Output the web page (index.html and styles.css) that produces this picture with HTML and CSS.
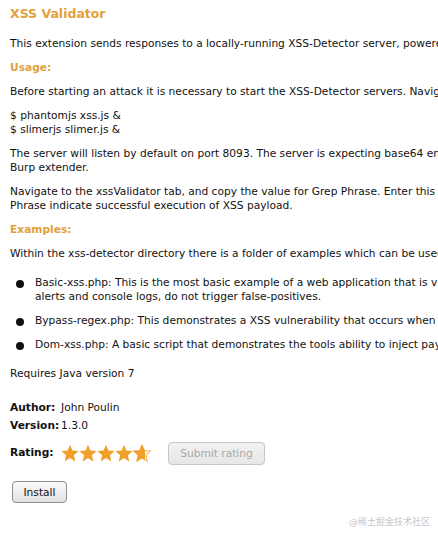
FILE: index.html
```html
<!DOCTYPE html>
<html>
<head>
<meta charset="utf-8">
<link rel="stylesheet" href="styles.css">
</head>
<body>
<div class="page">
  <h1 class="title">XSS Validator</h1>
  <p>This extension sends responses to a locally-running XSS-Detector server, powered by Phantom.js and/or Slimer.js.</p>
  <h2 class="sub">Usage:</h2>
  <p>Before starting an attack it is necessary to start the XSS-Detector servers. Navigate to the xss-detector directory and execute the following:</p>
  <p>$ phantomjs xss.js &amp;<br>$ slimerjs slimer.js &amp;</p>
  <p>The server will listen by default on port 8093. The server is expecting base64 encoded page responses passed via the<br>Burp extender.</p>
  <p>Navigate to the xssValidator tab, and copy the value for Grep Phrase. Enter this value in Intruder's Grep-Match. Matches on Grep<br>Phrase indicate successful execution of XSS payload.</p>
  <h2 class="sub">Examples:</h2>
  <p>Within the xss-detector directory there is a folder of examples which can be used to test the extender.</p>
  <ul class="list">
    <li><span class="dot"></span><span>Basic-xss.php: This is the most basic example of a web application that is vulnerable to XSS. It demonstrates how<br>alerts and console logs, do not trigger false-positives.</span></li>
    <li><span class="dot"></span><span>Bypass-regex.php: This demonstrates a XSS vulnerability that occurs when a weak regex is used.</span></li>
    <li><span class="dot"></span><span>Dom-xss.php: A basic script that demonstrates the tools ability to inject payloads into the DOM.</span></li>
  </ul>
  <p>Requires Java version 7</p>
  <div class="meta">
    <div class="row"><span class="label">Author:</span><span>John Poulin</span></div>
    <div class="row"><span class="label">Version:</span><span>1.3.0</span></div>
    <div class="row rating"><span class="label">Rating:</span>
      <span class="stars">
        <svg width="92" height="20" viewBox="0 0 92 20">
          <defs>
            <path id="st" d="M9 0.8 L11.4 6.6 L17.6 7.1 L12.9 11.2 L14.3 17.4 L9 14.1 L3.7 17.4 L5.1 11.2 L0.4 7.1 L6.6 6.6 Z"/>
            <clipPath id="part"><rect x="0" y="0" width="12" height="20"/></clipPath>
          </defs>
          <g fill="#eea02b">
            <use href="#st" x="0" y="1"/>
            <use href="#st" x="18" y="1"/>
            <use href="#st" x="36" y="1"/>
            <use href="#st" x="54" y="1"/>
            <use href="#st" x="72" y="1" fill="none" stroke="#eea02b" stroke-width="0.9"/>
            <g clip-path="url(#part)" transform="translate(72 1)"><use href="#st"/></g>
          </g>
        </svg>
      </span>
      <button class="btn disabled" type="button">Submit rating</button>
    </div>
  </div>
  <button class="btn install" type="button">Install</button>
</div>
<div class="watermark">@稀土掘金技术社区</div>
</body>
</html>
```
FILE: styles.css
```css
html, body {
  margin: 0;
  padding: 0;
  background: #fff;
}
body {
  font-family: "DejaVu Sans", "Noto Sans CJK SC", sans-serif;
  font-size: 10.65px;
  line-height: 14px;
  color: #111;
  width: 438px;
  height: 534px;
  overflow: hidden;
  position: relative;
}
.page {
  padding: 4px 0 0 10px;
  white-space: nowrap;
}
.title {
  font-size: 12.5px;
  line-height: 20px;
  font-weight: bold;
  color: #e2a03a;
  margin: 0 0 13px 0;
}
p {
  margin: 0 0 10px 0;
}
.sub {
  font-size: 10.65px;
  line-height: 14px;
  font-weight: bold;
  color: #e2a03a;
  margin: 0 0 10px 0;
}
.list {
  list-style: none;
  margin: 0 0 15px 0;
  padding: 5px 0 0 6px;
}
.list li {
  display: flex;
  align-items: flex-start;
  margin-bottom: 10px;
}
.dot {
  width: 8px;
  height: 8px;
  border-radius: 50%;
  background: #111;
  margin: 4px 11px 0 0;
  flex: none;
}
.meta {
  margin-top: 18px;
}
.row {
  display: flex;
  align-items: center;
  height: 18px;
}
.label {
  font-weight: bold;
  width: 51px;
  flex: none;
}
.rating {
  margin-top: 6px;
  height: 24px;
}
.stars {
  display: flex;
  width: 107px;
  flex: none;
}
.stars svg { display: block; }
.btn {
  font-family: "DejaVu Sans", sans-serif;
  font-size: 10.65px;
  border-radius: 4px;
  border: 1px solid #8f8f8f;
  background: linear-gradient(#fafafa, #e2e2e2);
  color: #111;
  padding: 0 7px;
  height: 22px;
}
.btn.disabled {
  color: #a8a8a8;
  border-color: #c6c6c6;
  background: linear-gradient(#f2f2f2, #e6e6e6);
  width: 97px;
  height: 23px;
}
.install {
  margin: 16px 0 0 2px;
  width: 55px;
}
.watermark {
  position: absolute;
  right: 8px;
  bottom: 5px;
  font-size: 9px;
  color: #c8c8c8;
}
```
